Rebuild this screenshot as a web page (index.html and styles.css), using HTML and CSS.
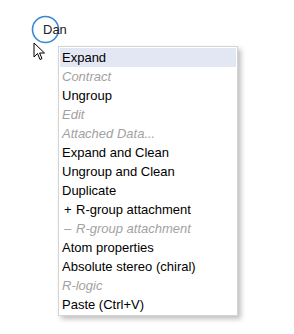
FILE: index.html
```html
<!DOCTYPE html>
<html lang="en">

<head>
    <meta charset="UTF-8">
    <meta name="viewport" content="width=device-width, initial-scale=1.0">
    <title>Context menu</title>
    <link rel="stylesheet" href="styles.css">
</head>

<body>
    <div class="canvas">
        <div class="atom">
            <svg class="atom-ring" width="30" height="30" viewBox="0 0 30 30">
                <circle cx="14.5" cy="14.5" r="13" fill="none" stroke="#3a87d6" stroke-width="1.6"/>
            </svg>
            <span class="atom-label">Dan</span>
        </div>

        <svg class="cursor" width="13" height="19" viewBox="0 0 13 19">
            <path d="M1 1 L1 15 L4.5 11.5 L7 17.5 L9 16.6 L6.6 11 L11.5 11 Z" fill="#fff" stroke="#000" stroke-width="1" stroke-linejoin="miter"/>
        </svg>

        <ul class="menu">
            <li class="item active">Expand</li>
            <li class="item disabled">Contract</li>
            <li class="item">Ungroup</li>
            <li class="item disabled">Edit</li>
            <li class="item disabled">Attached Data...</li>
            <li class="item">Expand and Clean</li>
            <li class="item">Ungroup and Clean</li>
            <li class="item">Duplicate</li>
            <li class="item"><span class="mark">+</span>R-group attachment</li>
            <li class="item disabled"><span class="mark">&ndash;</span>R-group attachment</li>
            <li class="item">Atom properties</li>
            <li class="item">Absolute stereo (chiral)</li>
            <li class="item disabled">R-logic</li>
            <li class="item">Paste (Ctrl+V)</li>
        </ul>
    </div>
</body>

</html>
```

FILE: styles.css
```css
body {
    margin: 0;
    font-family: "Liberation Sans", Arial, sans-serif;
    background: #fff;
}

.canvas {
    position: relative;
    width: 294px;
    height: 334px;
}

.atom {
    position: absolute;
    left: 31px;
    top: 15px;
}

.atom-ring {
    display: block;
}

.atom-label {
    position: absolute;
    left: 12px;
    top: 7px;
    font-size: 13px;
    color: #222;
}

.cursor {
    position: absolute;
    left: 33px;
    top: 42px;
}

.menu {
    position: absolute;
    left: 58px;
    top: 46px;
    width: 176px;
    margin: 0;
    padding: 1px;
    list-style: none;
    background: #fff;
    border: 1px solid #d4d4d4;
    box-shadow: 3px 3px 5px rgba(0, 0, 0, 0.25);
}

.item {
    height: 19px;
    line-height: 19px;
    padding-left: 2px;
    font-size: 13px;
    color: #000;
    white-space: nowrap;
}

.item.active {
    background: #e3e7f3;
}

.item.disabled {
    color: #a2a2a2;
    font-style: italic;
}

.mark {
    display: inline-block;
    width: 12px;
    padding-left: 2px;
    font-style: normal;
}
```
